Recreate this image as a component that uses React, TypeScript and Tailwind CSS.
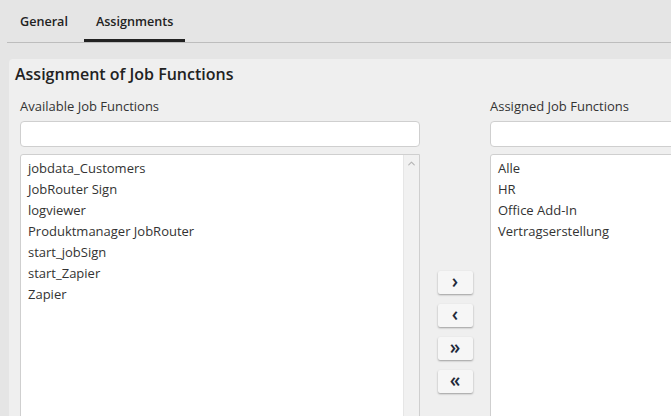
import { ChevronUp } from "lucide-react";

const available = [
  "jobdata_Customers",
  "JobRouter Sign",
  "logviewer",
  "Produktmanager JobRouter",
  "start_jobSign",
  "start_Zapier",
  "Zapier",
];

const assigned = ["Alle", "HR", "Office Add-In", "Vertragserstellung"];

function Tab({ label, active }: { label: string; active?: boolean }) {
  return (
    <div
      className={`h-[42px] px-[12px] pt-[13px] text-[12.6px] leading-[18px] font-semibold border-b-[3px] ${
        active ? "border-[#222]" : "border-transparent"
      }`}
    >
      {label}
    </div>
  );
}

function ListColumn({
  title,
  items,
  scrollbar,
}: {
  title: string;
  items: string[];
  scrollbar?: boolean;
}) {
  return (
    <div className="w-[400px] shrink-0 flex flex-col">
      <div className="text-[13px] leading-[18px] text-[#333]">{title}</div>
      <input
        className="mt-[6px] h-[26px] w-full bg-white border border-[#cfcfcf] rounded-[4px] outline-none px-2 text-[13px]"
        type="text"
      />
      <div className="mt-[7px] h-[356px] bg-white border border-[#cfcfcf] rounded-tl-[3px] flex">
        <ul className="flex-1 pt-[3px] pl-[7px] text-[13px] leading-[21px] text-[#333]">
          {items.map((it) => (
            <li key={it}>{it}</li>
          ))}
        </ul>
        {scrollbar && (
          <div className="w-[16px] bg-[#f1f1f1] border-l border-[#e6e6e6] flex justify-center pt-[3px]">
            <ChevronUp size={11} strokeWidth={2.5} className="text-[#b5b5b5]" />
          </div>
        )}
      </div>
    </div>
  );
}

function MoveButton({ glyph }: { glyph: string }) {
  return (
    <button className="w-[35px] h-[23px] bg-[#f6f6f6] rounded-[2px] shadow-[0_1px_2px_rgba(0,0,0,0.35)] flex items-center justify-center text-[19px] leading-none font-semibold text-[#1f2a3a]">
      <span className="-mt-[3px]">{glyph}</span>
    </button>
  );
}

export default function App() {
  return (
    <div
      className="w-[671px] h-[416px] overflow-hidden bg-[#e5e5e5] text-[#222]"
      style={{ fontFamily: '"Open Sans", "Liberation Sans", sans-serif' }}
    >
      <div className="ml-[7px] flex border-b border-[#bdbdbd]">
        <div className="ml-[1px] flex gap-[4px]">
          <Tab label="General" />
          <Tab label="Assignments" active />
        </div>
      </div>

      <div className="ml-[9px] mt-[16px] h-[400px] bg-[#efefef] rounded-tl-[4px] pt-[4px]">
        <h2 className="pl-[6px] text-[16px] leading-[22px] font-semibold text-[#222]">
          Assignment of Job Functions
        </h2>
        <div className="mt-[12px] pl-[11px] flex">
          <ListColumn title="Available Job Functions" items={available} scrollbar />
          <div className="w-[70px] shrink-0 flex flex-col items-center gap-[10px] pt-[174px]">
            <MoveButton glyph="›" />
            <MoveButton glyph="‹" />
            <MoveButton glyph="»" />
            <MoveButton glyph="«" />
          </div>
          <ListColumn title="Assigned Job Functions" items={assigned} />
        </div>
      </div>
    </div>
  );
}
